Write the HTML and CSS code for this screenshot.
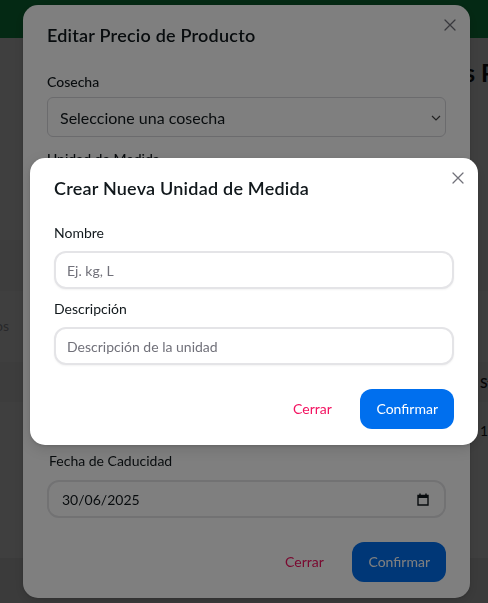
FILE: index.html
```html
<!DOCTYPE html>
<html lang="es">
<head>
<meta charset="utf-8">
<title>Editar Precio de Producto</title>
<link rel="stylesheet" href="styles.css">
</head>
<body>
<div class="page">
  <header class="topbar"></header>
  <main class="main">
    <h1 class="page-title">Precios Productos</h1>
    <div class="toolbar"></div>
    <div class="side-note"><span>Listado de productos</span></div>
    <div class="table">
      <div class="table-row table-head"><span class="cell-hidden"></span><span class="cell">Stock</span></div>
      <div class="table-row table-body"><span class="cell-hidden"></span><span class="cell">1.50</span></div>
    </div>
  </main>
  <footer class="page-footer"></footer>
</div>

<div class="backdrop"></div>
<div class="modal-layer layer-edit">
  <section class="modal modal-edit">
    <header class="modal-header">Editar Precio de Producto</header>
    <button class="modal-close" type="button" aria-label="Cerrar">
      <svg viewBox="0 0 24 24" width="20" height="20"><path d="M18 6L6 18M6 6l12 12" fill="none" stroke="currentColor" stroke-width="1.5" stroke-linecap="round"/></svg>
    </button>
    <div class="modal-body edit-body">
      <div class="field">
        <label class="field-label">Cosecha</label>
        <div class="select">
          <span>Seleccione una cosecha</span>
          <svg class="chevron" viewBox="0 0 10 6" width="10" height="6"><path d="M1 1l4 4 4-4" fill="none" stroke="currentColor" stroke-width="1.2"/></svg>
        </div>
      </div>
      <div class="field">
        <label class="field-label">Unidad de Medida</label>
        <div class="select"></div>
      </div>
      <div class="field">
        <span class="blank-label"></span>
        <div class="select"></div>
      </div>
      <div class="field">
        <span class="blank-label"></span>
        <div class="select"></div>
      </div>
      <div class="field">
        <span class="blank-label"></span>
        <div class="select select-small"></div>
      </div>
      <div class="field">
        <label class="field-label date-label">Fecha de Caducidad</label>
        <div class="date-input">
          <span>30/06/2025</span>
          <svg class="cal" viewBox="0 0 12 13" width="12" height="13"><path d="M1 2.5h10v9.5H1z" fill="none" stroke="currentColor" stroke-width="1.4"/><path d="M1 2h10v3H1z" fill="currentColor"/><path d="M3 0.5v2M9 0.5v2" stroke="currentColor" stroke-width="1.4"/></svg>
        </div>
      </div>
    </div>
    <footer class="modal-footer">
      <button class="btn btn-light" type="button">Cerrar</button>
      <button class="btn btn-primary" type="button">Confirmar</button>
    </footer>
  </section>
</div>

<div class="backdrop"></div>
<div class="modal-layer layer-unit">
  <section class="modal modal-unit">
    <header class="modal-header">Crear Nueva Unidad de Medida</header>
    <button class="modal-close" type="button" aria-label="Cerrar">
      <svg viewBox="0 0 24 24" width="20" height="20"><path d="M18 6L6 18M6 6l12 12" fill="none" stroke="currentColor" stroke-width="1.5" stroke-linecap="round"/></svg>
    </button>
    <div class="modal-body unit-body">
      <div class="field">
        <label class="field-label unit-label" for="nombre">Nombre</label>
        <input class="text-input" id="nombre" type="text" placeholder="Ej. kg, L">
      </div>
      <div class="field">
        <label class="field-label unit-label" for="desc">Descripción</label>
        <input class="text-input" id="desc" type="text" placeholder="Descripción de la unidad">
      </div>
    </div>
    <footer class="modal-footer">
      <button class="btn btn-light" type="button">Cerrar</button>
      <button class="btn btn-primary" type="button">Confirmar</button>
    </footer>
  </section>
</div>
</body>
</html>
```
FILE: styles.css
```css
* { box-sizing: border-box; }

body {
  margin: 0;
  font-family: Lato, "Open Sans", sans-serif;
  color: #11181c;
  background: #ffffff;
  overflow: hidden;
}

/* ---------- background page ---------- */
.page {
  height: 603px;
  display: flex;
  flex-direction: column;
}
.topbar {
  flex: none;
  height: 38px;
  background: #13a451;
}
.main {
  flex: none;
  height: 520px;
  background: #ffffff;
  display: flex;
  flex-direction: column;
}
.page-title {
  margin: 19px 0 0 397px;
  font-size: 24px;
  line-height: 32px;
  font-weight: 700;
  color: #111111;
  white-space: nowrap;
}
.toolbar {
  margin-top: 151px;
  height: 51px;
  background: #f4f4f5;
}
.side-note {
  margin-top: 25px;
  width: 9px;
  height: 20px;
  display: flex;
  justify-content: flex-end;
  white-space: nowrap;
  font-size: 14px;
  line-height: 20px;
  color: #a1a1aa;
}
.table {
  margin-top: 26px;
  display: flex;
  flex-direction: column;
}
.table-row {
  display: flex;
  align-items: center;
  white-space: nowrap;
  font-size: 14px;
  color: #18181b;
}
.table-head {
  height: 40px;
  background: #f4f4f5;
  font-weight: 600;
}
.table-body {
  height: 56px;
}
.cell-hidden { width: 480px; flex: none; }
.page-footer {
  flex: 1;
  background: #ececec;
}

/* ---------- overlays ---------- */
.backdrop {
  position: fixed;
  inset: 0;
  background: rgba(0, 0, 0, 0.5);
}
.modal-layer {
  position: fixed;
  inset: 0;
  display: flex;
  align-items: flex-start;
}
.layer-edit { padding: 5px 0 0 23px; }
.layer-unit { padding: 158px 0 0 30px; }

.modal {
  position: relative;
  background: #ffffff;
  border-radius: 15px;
  display: flex;
  flex-direction: column;
  box-shadow: 0 1px 3px rgba(0, 0, 0, 0.12), 0 4px 14px rgba(0, 0, 0, 0.12);
}
.modal-edit { width: 447px; }
.modal-unit { width: 448px; }

.modal-header {
  padding: 16px 24px;
  font-size: 18px;
  line-height: 28px;
  font-weight: 600;
  letter-spacing: 0.22px;
  color: #11181c;
}
.modal-close {
  position: absolute;
  top: 5px;
  right: 5px;
  width: 30px;
  height: 30px;
  padding: 0;
  border: 0;
  background: transparent;
  color: #71717a;
  display: flex;
  align-items: center;
  justify-content: center;
}
.modal-body {
  display: flex;
  flex-direction: column;
  padding: 0 24px;
}
.edit-body { padding-top: 7px; padding-bottom: 8px; gap: 12px; }
.unit-body { padding-top: 5px; padding-bottom: 8px; gap: 10px; }

.field {
  display: flex;
  flex-direction: column;
}
.field-label {
  font-size: 14px;
  line-height: 20px;
  font-weight: 500;
  color: #11181c;
  margin-bottom: 5px;
}
.blank-label {
  height: 20px;
  margin-bottom: 5px;
}
.date-label {
  padding-left: 2px;
  font-weight: 400;
  margin-bottom: 9px;
}
.unit-label {
  font-weight: 400;
  margin-bottom: 8px;
}

.select {
  height: 40px;
  border: 1px solid #d6d6da;
  border-radius: 6px;
  padding: 0 4px 0 12px;
  display: flex;
  align-items: center;
  justify-content: space-between;
  font-size: 16px;
  color: #11181c;
}
.select-small { height: 34px; }
.chevron { color: #444444; margin-top: 1px; }

.date-input {
  height: 38px;
  border: 2px solid #e4e4e7;
  border-radius: 12px;
  padding: 0 15px 0 13px;
  display: flex;
  align-items: center;
  justify-content: space-between;
  font-size: 14px;
  color: #11181c;
}
.cal { color: #11181c; }

.text-input {
  height: 38px;
  width: 100%;
  border: 2px solid #e4e4e7;
  border-radius: 12px;
  padding: 0 11px;
  font-family: inherit;
  font-size: 14px;
  color: #11181c;
  background: #ffffff;
  box-shadow: 0 1px 2px rgba(0, 0, 0, 0.05);
  outline: none;
}
.text-input::placeholder { color: #71717a; }

.modal-footer {
  display: flex;
  justify-content: flex-end;
  gap: 8px;
  padding: 16px 24px;
}
.btn {
  height: 40px;
  min-width: 80px;
  padding: 0 16px;
  border: 0;
  border-radius: 12px;
  font-family: inherit;
  font-size: 14px;
  line-height: 20px;
}
.btn-light { background: transparent; color: #f31260; }
.btn-primary { background: #006fee; color: #ffffff; }
```
